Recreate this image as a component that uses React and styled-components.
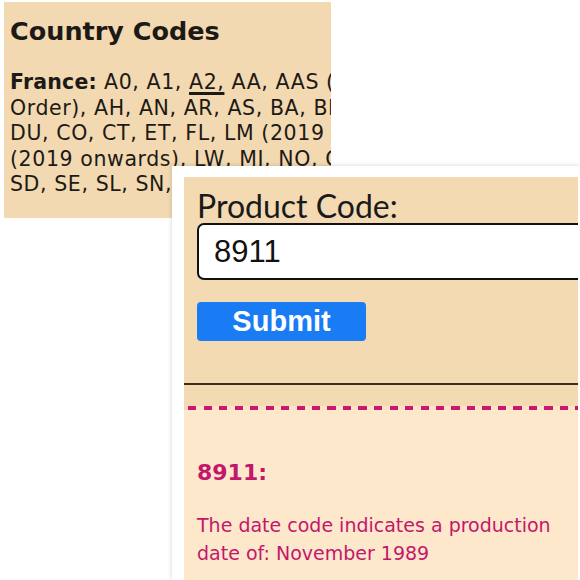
import React from 'react'
import styled, { createGlobalStyle } from 'styled-components'

const GlobalStyle = createGlobalStyle`
  html, body {
    margin: 0;
    padding: 0;
    background: #ffffff;
  }
  body {
    font-family: "DejaVu Sans", Verdana, sans-serif;
  }
`

const Page = styled.div`
  position: relative;
  width: 580px;
  height: 580px;
  overflow: hidden;
  background: #ffffff;
`

const CodesPanel = styled.section`
  margin: 2px 0 0 4px;
  width: 327px;
  height: 216px;
  overflow: hidden;
  background: #f2d9b1;
  padding: 13px 0 0 6px;
  box-sizing: border-box;
  color: #1d1a16;
`

const PanelTitle = styled.h2`
  margin: 0 0 22px 0;
  font-size: 25.5px;
  font-weight: 700;
  line-height: 33px;
`

const CodeList = styled.p`
  margin: 0;
  font-size: 20.5px;
  letter-spacing: 0.6px;
  line-height: 25.5px;
  white-space: nowrap;
`

const Country = styled.b`
  font-weight: 700;
  letter-spacing: 0.2px;
`

const CodeLink = styled.span`
  text-decoration: underline;
  text-decoration-thickness: 3px;
  text-underline-offset: 3px;
`

/* the cut-out of the lookup form lies over the codes panel */
const CardFrame = styled.div`
  position: absolute;
  left: 172px;
  top: 166px;
  right: 0;
  bottom: 0;
  background: #ffffff;
  padding: 11px 2px 0 12px;
  box-shadow: -1px -1px 4px rgba(0, 0, 0, 0.12);
`

const Card = styled.div`
  height: 100%;
  overflow: hidden;
  display: flex;
  flex-direction: column;
  background: #fde8cc;
`

const FormArea = styled.div`
  background: #f3dab2;
  padding-top: 12px;
`

const Fields = styled.div`
  padding-left: 13px;
  display: flex;
  flex-direction: column;
  align-items: flex-start;
`

const Label = styled.label`
  font-family: Lato, "Open Sans", sans-serif;
  font-size: 32px;
  line-height: 34px;
  color: #1a1a1a;
`

const CodeInput = styled.input`
  width: 420px;
  height: 57px;
  box-sizing: border-box;
  border: 2px solid #111111;
  border-radius: 7px;
  background: #ffffff;
  padding: 0 0 0 15px;
  font-family: "Liberation Sans", Arial, sans-serif;
  font-size: 31px;
  color: #111111;
  outline: none;
`

const SubmitButton = styled.button`
  margin-top: 22px;
  width: 169px;
  height: 39px;
  border: none;
  border-radius: 4px;
  background: #1a7cf4;
  color: #ffffff;
  font-family: "Liberation Sans", Arial, sans-serif;
  font-weight: 700;
  font-size: 29px;
  line-height: 39px;
  padding: 0;
`

const Rule = styled.div`
  margin-top: 42px;
  height: 2px;
  background: #3b2c1e;
`

const Dashes = styled.div`
  margin: 21px 0 0 4px;
  height: 4px;
  background: repeating-linear-gradient(
    to right,
    #c8186f 0 8px,
    #fbe3c4 8px 15.5px
  );
`

const Result = styled.div`
  padding: 49px 0 0 13px;
  color: #c3176b;
`

const ResultCode = styled.h3`
  margin: 0 0 25px 0;
  font-size: 22px;
  font-weight: 700;
  line-height: 27px;
`

const ResultText = styled.p`
  margin: 0;
  font-size: 19px;
  line-height: 28px;
`

export default function App() {
  return (
    <Page>
      <GlobalStyle />
      <CodesPanel>
        <PanelTitle>Country Codes</PanelTitle>
        <CodeList>
          <Country>France:</Country> A0, A1, <CodeLink>A2,</CodeLink> AA, AAS (Special
          <br />
          Order), AH, AN, AR, AS, BA, BD, BF, CE, CH,
          <br />
          DU, CO, CT, ET, FL, LM (2019 onwards), LP
          <br />
          (2019 onwards), LW, MI, NO, OS, RC, SA,
          <br />
          SD, SE, SL, SN, SP, TA, TH, VI
        </CodeList>
      </CodesPanel>
      <CardFrame>
        <Card>
          <FormArea>
            <Fields>
              <Label htmlFor="code">Product Code:</Label>
              <CodeInput id="code" defaultValue="8911" />
              <SubmitButton type="button">Submit</SubmitButton>
            </Fields>
            <Rule />
            <Dashes />
          </FormArea>
          <Result>
            <ResultCode>8911:</ResultCode>
            <ResultText>
              The date code indicates a production
              <br />
              date of: November 1989
            </ResultText>
          </Result>
        </Card>
      </CardFrame>
    </Page>
  )
}
